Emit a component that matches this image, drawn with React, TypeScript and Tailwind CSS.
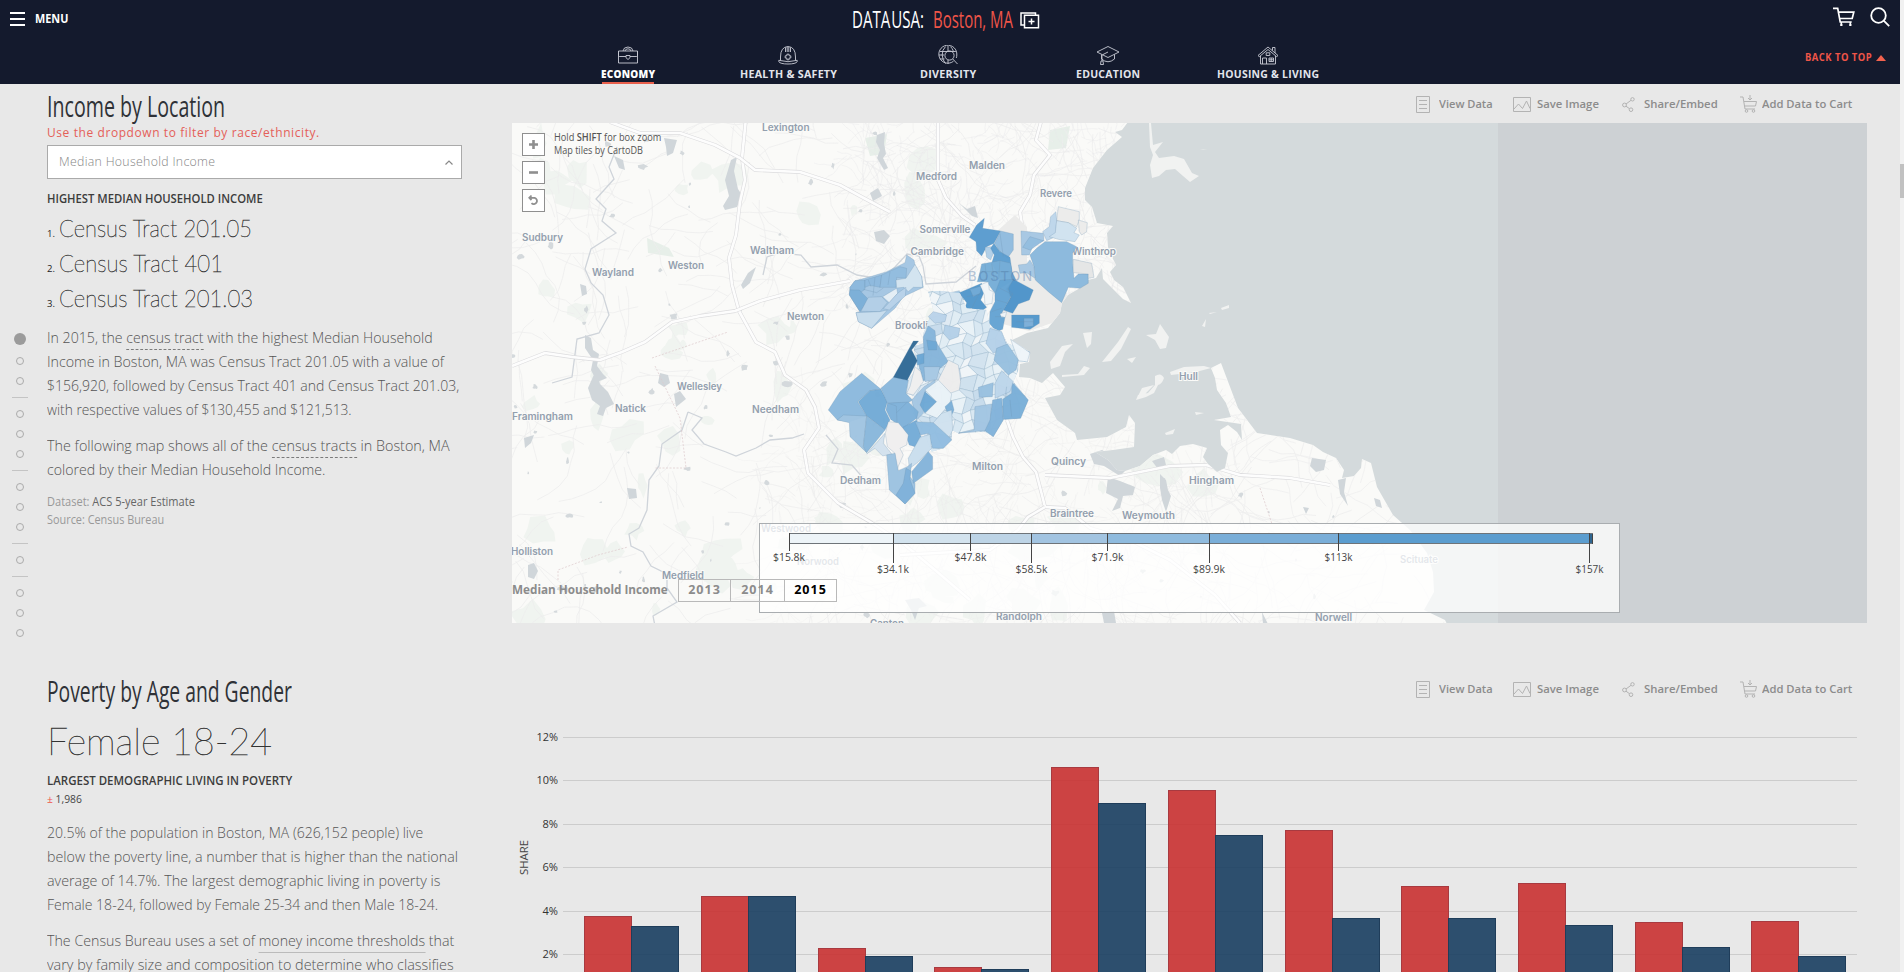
import { useLayoutEffect, useRef, type ReactNode } from "react";

/* Condenses one line of text horizontally so that it fills exactly w pixels. */
function Fit({ w, children, className = "" }: { w: number; children: ReactNode; className?: string }) {
  const ref = useRef<HTMLSpanElement>(null);
  useLayoutEffect(() => {
    const el = ref.current;
    if (el) el.style.transform = `scaleX(${w / el.offsetWidth})`;
  }, [w]);
  return (
    <span className={`block whitespace-nowrap ${className}`} style={{ width: w }}>
      <span ref={ref} className="inline-block origin-left">
        {children}
      </span>
    </span>
  );
}

/* ---------- header ---------- */

const navIcons: Record<string, ReactNode> = {
  ECONOMY: (
    <>
      <path d="M1.5 6h19v12h-19zM1.5 6v4.500q0 1 1 1h6.500M20.500 6v4.500q0 1-1 1H13M9 10.500h4v2.200l-2 1.800-2-1.800zM6 6q.5-4 5-4t5 4M8 6q.3-2.200 3-2.200T14 6" />
    </>
  ),
  "HEALTH & SAFETY": (
    <>
      <path d="M3.500 15.500V12q0-10 7.500-10.500 7.500.5 7.500 10.500v3.500M1.800 15.300q9.200 2.800 18.400 0v1.400q-1.600 2.300-9.200 2.300t-9.200-2.300zM8.500 2.500v4.500M13.500 2.500v4.500M10.200 2v5M11.800 2v5" />
      <path d="M9.900 9.200h2.200v1.600h1.700v2.200h-1.700v1.800H9.900V13H8.200v-2.200h1.700z" />
    </>
  ),
  DIVERSITY: (
    <>
      <path d="M16.500 16.200A9 9 0 1 1 19.800 10q0 1.500-.5 3M2.800 6.500h16M2 10h5M2.800 14h4.700M11 1v5M11 15v4M8.500 1.600Q5 5 5.200 10t3.300 8.600M13.500 1.600Q15.500 3.500 16.300 6" />
      <circle cx="12.500" cy="10.500" r="4.600" />
      <path d="m15.800 14 4.700 5" />
    </>
  ),
  EDUCATION: (
    <>
      <path d="M11 1.500 22 7l-11 5.500L0 7zM4.500 9.500V14q6.500 5.500 13 0V9.500M11 7 6 9.500q-1 .5-1 2V16M4 16h2l.5 3.500h-3z" />
    </>
  ),
  "HOUSING & LIVING": (
    <>
      <path d="M1 10.500 11 2l10 8.500-1.300 1.200L11 4.500l-8.700 7.200zM3.500 11v8h15v-8M15.500 5.500V2.500H18V8M5.500 19v-6h4v6M12 13h4.500v3.500H12zM14.200 13v3.500M12 14.800h4.500M9.200 7.800h3.600v2.700H9.200z" />
    </>
  ),
};

const navItems: { label: string; w: number; active?: boolean }[] = [
  { label: "ECONOMY", w: 54, active: true },
  { label: "HEALTH & SAFETY", w: 97 },
  { label: "DIVERSITY", w: 57 },
  { label: "EDUCATION", w: 64 },
  { label: "HOUSING & LIVING", w: 102 },
];

function Header() {
  return (
    <header className="grid h-[84px] shrink-0 grid-cols-[548px_800px_552px] grid-rows-[40px_44px] bg-[#141a2d] text-white">
      <div className="flex items-center gap-[10px] pl-[10px]">
        <div className="-mt-[2px] flex w-[15px] flex-col gap-[4px]">
          <span className="h-[2px] bg-white" />
          <span className="h-[2px] bg-white" />
          <span className="h-[2px] bg-white" />
        </div>
        <Fit w={33} className="-mt-[2px] text-[12.500px] font-bold">MENU</Fit>
      </div>
      <div className="flex items-center pl-[304px] text-[24.500px] font-semibold leading-[38px]">
        <Fit w={72} className="-mt-[2px] font-medium [word-spacing:-5px]">DATA USA:</Fit>
        <Fit w={80} className="-mt-[2px] ml-[9px] font-medium text-[#ef5548]">Boston, MA</Fit>
        <svg className="ml-[7px] h-[17px] w-[20px]" viewBox="0 0 20 17" fill="none" stroke="white" strokeWidth="1.500">
          <path d="M4.500 3.200h14v12.500h-14zM4 13H1V.9h14.500v2M11.500 6.500v6M8.500 9.500h6" />
        </svg>
      </div>
      <div className="flex items-start justify-end gap-[15px] pr-[10px] pt-[7px]">
        <svg className="h-[20px] w-[22px]" viewBox="0 0 22 20" fill="none" stroke="white" strokeWidth="1.700">
          <path d="M0 1.300h4.700L7.200 15h11.500M5.500 5.200h15.300l-1.600 6.300H6.700M8.300 15v4M17.300 15v4" />
          <path d="M7.300 18h2.200M16.300 18h2.200" />
        </svg>
        <svg className="h-[20px] w-[20px]" viewBox="0 0 20 20" fill="none" stroke="white" strokeWidth="1.800">
          <circle cx="8.500" cy="8.500" r="7.300" />
          <path d="m13.700 13.700 5.500 5.500" />
        </svg>
      </div>
      <nav className="col-start-2 grid grid-cols-5">
        {navItems.map((n) => (
          <a key={n.label} className="flex flex-col items-center pt-[5px]">
            <svg className="h-[20px] w-[22px]" viewBox="0 0 22 20" fill="none" stroke="#c9ccd6" strokeWidth="0.900">
              {navIcons[n.label]}
            </svg>
            <Fit w={n.w} className={n.active ? "h-[17px] text-[10px] font-extrabold leading-[19px] tracking-wide" : "h-[17px] text-[10px] font-bold leading-[19px] tracking-wide text-[#e3e5ec]"}>
              {n.label}
            </Fit>
            {n.active && <span className="h-[2px] w-[52px] bg-[#e8604c]" />}
          </a>
        ))}
      </nav>
      <div className="flex items-start justify-end gap-[4px] pr-[14px] pt-[7px] text-[#ef5548]">
        <Fit w={67} className="text-[10px] font-bold leading-[20px] tracking-wider">BACK TO TOP</Fit>
        <svg className="mt-[8px] h-[6px] w-[10px]" viewBox="0 0 10 6"><path d="M5 0l5 6H0z" fill="#f2624e" /></svg>
      </div>
    </header>
  );
}

/* ---------- side progress dots ---------- */

const dotGroups = [2, 3, 3, 1, 3];

function Dots() {
  return (
    <aside className="flex w-[47px] shrink-0 flex-col pl-[12px] pt-[243px]">
      <span className="flex h-[24px] w-[16px] items-center justify-center"><i className="h-[12px] w-[12px] rounded-full bg-[#9b9b9b]" /></span>
      {dotGroups.map((n, g) => (
        <div key={g} className="flex w-[16px] flex-col">
          {Array.from({ length: n }, (_, i) => (
            <span key={i} className="flex h-[20px] items-center justify-center"><i className="h-[8px] w-[8px] rounded-full border border-[#ababab]" /></span>
          ))}
          {g < 4 && <span className="flex h-[13px] items-center"><i className="h-px w-full bg-[#c4c4c4]" /></span>}
        </div>
      ))}
    </aside>
  );
}

/* ---------- section toolbar ---------- */

function Toolbar() {
  const svg = "shrink-0 fill-none stroke-[#b3b3b3]";
  return (
    <div className="flex h-[39px] items-center pl-[904px] pt-[1px] text-[11.500px] font-semibold text-[#8c8c8c]">
      <svg className={`h-[17px] w-[14px] ${svg}`} viewBox="0 0 14 17"><path d="M.5.5h13v16H.5zM3 4.500h8M3 8.500h8M3 12.500h8" /></svg>
      <Fit w={54} className="ml-[9px]">View Data</Fit>
      <svg className={`ml-[20px] h-[15px] w-[18px] ${svg}`} viewBox="0 0 18 15"><path d="M.5.500h17v14H.5zM1 12l4.500-5 4 4.500L13.500 4l3.500 7.500" /></svg>
      <Fit w={62} className="ml-[6px]">Save Image</Fit>
      <svg className={`ml-[23px] h-[15px] w-[13px] ${svg}`} viewBox="0 0 13 15"><circle cx="2.500" cy="8" r="1.900" /><circle cx="10.500" cy="2.300" r="1.700" /><circle cx="9" cy="12.700" r="1.800" /><path d="m4 7 5-3.700M4 9.200l3.500 2.500" /></svg>
      <Fit w={74} className="ml-[9px]">Share/Embed</Fit>
      <svg className={`ml-[22px] h-[18px] w-[17px] ${svg}`} viewBox="0 0 17 18"><path d="M0 2h3l2 12h10M4 6.500h12.500L15.500 11h-11M10 0v4.500M8 3l2 2 2-2" /><circle cx="6.500" cy="16" r="1.300" /><circle cx="13.500" cy="16" r="1.300" /></svg>
      <Fit w={90} className="ml-[5px]">Add Data to Cart</Fit>
    </div>
  );
}

/* ---------- map ---------- */

/* Small seeded generator so the street texture is the same on every render. */
function seeded(seed: number) {
  let s = seed;
  return () => {
    s = (s * 16807) % 2147483647;
    return s / 2147483647;
  };
}

const rnd = seeded(4711);
const streets = Array.from({ length: 520 }, () => {
  let x = 505 + rnd() * 880;
  let y = 118 + rnd() * 510;
  let a = rnd() * 6.283;
  let d = `M${x.toFixed(1)} ${y.toFixed(1)}`;
  const n = 3 + Math.floor(rnd() * 5);
  for (let i = 0; i < n; i++) {
    a += (rnd() - 0.5) * 0.9;
    x += Math.cos(a) * 13;
    y += Math.sin(a) * 13;
    d += `L${x.toFixed(1)} ${y.toFixed(1)}`;
  }
  return d;
}).join("");

function blobs(count: number, x0: number, x1: number, y0: number, y1: number, r: number) {
  return Array.from({ length: count }, () => {
    const cx = x0 + rnd() * (x1 - x0);
    const cy = y0 + rnd() * (y1 - y0);
    const k = r * (0.4 + rnd());
    const sx = 0.5 + rnd();
    const pts = Array.from({ length: 9 }, (_, i) => {
      const t = (i / 9) * 6.283;
      const q = k * (0.55 + rnd() * 0.7);
      return `${(cx + Math.cos(t) * q * sx).toFixed(1)} ${(cy + Math.sin(t) * q).toFixed(1)}`;
    });
    return `M${pts.join("L")}Z`;
  }).join("");
}
const parks = blobs(64, 512, 960, 130, 620, 13) + blobs(16, 960, 1340, 470, 620, 14);
const ponds = blobs(70, 512, 900, 130, 620, 2.6) + blobs(16, 1000, 1340, 460, 620, 2.4);

/* District mosaic: a jittered grid in the 960-unit district space. */
const g = 33;
const node = (i: number, j: number): [number, number] => {
  const r = seeded(i * 7919 + j * 104729 + 17);
  r();
  return [350 + i * g + (r() - 0.5) * 24 + (j % 2) * 9, 250 + j * g + (r() - 0.5) * 24 - i * 3];
};
const shades = ["#e9f2f7", "#d9e8f2", "#cfe1ee", "#e1edf4", "#c8dcec", "#dfeaf3", "#f0f5f8", "#d3e3ef"];
const mosaic: [string, string][] = [];
for (let i = 0; i < 11; i++)
  for (let j = 0; j < 17; j++) {
    const p = [node(i, j), node(i + 1, j), node(i + 1, j + 1), node(i, j + 1)];
    mosaic.push([`M${p.map((q) => q.map((v) => v.toFixed(0)).join(" ")).join("L")}Z`, shades[Math.floor(rnd() * shades.length)]]);
  }

const mass =
  "385,275 420,272 480,280 500,325 560,330 570,380 605,395 622,430 690,455 680,485 655,485 655,510 640,545 685,600 660,655 610,660 580,710 555,695 475,700 455,690 455,720 430,745 395,755 370,700 330,620 345,590 318,580 325,540 352,500 340,440 370,430 370,400 400,330";

const tracts: [string, string][] = [
  ["#a3c5e2", "165,242 205,232 260,215 315,188 320,165 342,180 345,195 365,230 370,262 310,290 285,325 215,385 175,365 168,338 180,335 148,285 150,262"],
  ["#8cb9dd", "165,242 195,240 195,268 185,275 150,270 150,262"],
  ["#7cafd8", "150,270 178,270 205,298 180,335 148,285"],
  ["#8ebade", "195,240 245,225 240,262 210,256 195,262"],
  ["#93bddf", "245,225 300,200 320,205 318,235 290,232 288,262 240,262"],
  ["#b4d0e7", "205,292 245,290 262,308 240,335 183,334"],
  ["#e6eff6", "248,290 290,265 293,280 268,308"],
  ["#c9deed", "168,338 240,335 262,330 215,385 175,365"],
  ["#d5e5f1", "318,235 345,193 365,230 368,262 340,262 325,275 312,262 290,264 288,240"],
  ["#b9d3e9", "295,278 318,262 316,288 290,310 268,330 250,326"],
  ["#ebebea", "775,20 838,35 838,60 830,80 805,68 770,62"],
  ["#a5c6e2", "663,93 730,100 732,122 700,135 688,165 665,165"],
  ["#94bddf", "690,110 730,122 690,150 668,142"],
  ["#bdd6ea", "728,95 748,80 752,50 768,35 770,62 766,110 740,122"],
  ["#d0e2ef", "770,62 805,68 830,85 822,98 838,105 825,125 775,118 748,110 766,98"],
  ["#ebebea", "835,60 862,68 860,95 845,105 838,95"],
  ["#89b8dc", "690,165 710,145 735,125 800,125 830,140 818,160 818,190 822,235 835,222 865,222 865,250 840,265 805,262 785,308 745,275 706,240 702,200"],
  ["#a5c6e2", "655,195 680,192 690,180 702,200 705,235 680,218 660,220"],
  ["#e4e5e5", "820,178 875,190 882,232 865,235 865,222 820,218"],
  ["#599bce", "508,112 530,75 553,55 548,85 602,93 582,130 560,140 545,168 530,152 528,125"],
  ["#90bbde", "602,93 640,102 640,150 622,175 600,155 584,130"],
  ["#b0cee7", "555,142 575,140 580,160 572,180 560,172"],
  ["#5b9dcf", "582,130 600,155 630,172 636,215 648,240 600,235 575,190 583,165 572,145"],
  ["#76add7", "545,192 600,182 632,190 640,240 600,265 585,280 560,245 532,245 540,215"],
  ["#4c93c9", "640,238 700,270 688,300 655,312 638,340 610,330 632,292 618,268"],
  ["#64a3d3", "585,280 600,240 640,238 625,265 632,292 605,340 600,342 615,352 608,388 590,395 568,370 570,335 585,305"],
  ["#a9cae4", "430,283 478,272 492,300 470,292"],
  ["#5297cb", "478,278 545,250 553,275 542,300 560,322 530,345 515,325 492,335 500,308"],
  ["#72aad6", "510,268 545,258 540,280 520,290"],
  ["#f1f5f7", "540,255 565,245 568,270 580,275 576,310 555,315 553,285"],
  ["#eef3f6", "600,342 620,335 616,352 604,352"],
  ["#5297cb", "635,345 718,345 718,370 690,388 635,382"],
  ["#7fb1d9", "672,355 700,355 700,378 672,382"],
];

const tractsSouth: [string, string][] = [
  ["#b5d1e8", "570,385 605,395 622,440 580,460 558,430"],
  ["#eef5f9", "632,418 690,458 682,486 655,482"],
  ["#98c0df", "590,445 622,432 655,480 648,510 625,525 582,480"],
  ["#bad3e9", "385,350 400,335 440,345 435,365 405,370"],
  ["#b4d0e7", "435,375 480,385 475,410 448,420 430,400"],
  ["#86b5da", "385,378 405,392 408,425 445,485 420,505 405,535 370,542 355,490 372,465 370,410"],
  ["#6fa8d5", "380,420 410,425 410,450 385,450"],
  ["#6ba6d4", "350,465 372,460 372,490 352,495"],
  ["#a9c9e4", "372,500 420,500 410,538 375,545"],
  ["#edecec", "412,545 445,480 475,495 482,545 478,570 450,580"],
  ["#f0eeee", "330,560 345,500 362,515 370,545 340,585 320,580"],
  ["#a5c6e2", "335,600 372,560 405,540 408,560 375,575 370,640 350,660"],
  ["#6ea8d5", "375,575 410,605 375,640 360,615"],
  ["#e9f2f7", "375,570 415,540 455,582 450,610 412,655 375,640 410,605"],
  ["#7cafd8", "435,620 455,602 462,630 450,655"],
  ["#99c0df", "535,562 580,548 577,590 538,592"],
  ["#a2c5e2", "525,620 575,612 570,690 475,700 522,690"],
  ["#82b3da", "578,600 605,595 610,660 580,710 555,692 570,660"],
  ["#7bafd8", "608,598 635,580 635,545 685,600 662,655 610,658"],
  ["#bdd6ea", "585,550 605,512 640,545 630,575 585,595"],
  ["#8bb9dd", "185,520 243,568 210,572 173,605 200,648 150,665 112,660 85,630 120,575"],
  ["#72aad6", "175,605 210,572 243,568 262,605 255,630 270,660 255,690 200,648"],
  ["#a0c4e1", "112,660 130,645 200,648 190,740 200,758 150,710 148,668"],
  ["#88b7db", "200,648 255,690 200,758 190,740"],
  ["#8ab8dc", "243,565 282,530 325,540 318,580 337,600 325,608 262,610"],
  ["#7eb1d9", "262,610 325,606 355,635 350,655 310,685 272,658 258,630"],
  ["#74abd7", "308,682 350,660 364,715 345,740 328,735"],
  ["#92bde0", "345,665 400,668 430,690 455,720 430,745 398,745 385,700 362,705"],
  ["#d0e1ee", "400,668 425,640 455,630 458,690 448,712"],
  ["#c9deed", "325,775 360,712 390,703 395,745 350,790 328,806"],
  ["#d3e1ed", "200,762 255,700 250,730 275,762 248,768 225,745"],
  ["#f0eeee", "256,700 265,665 295,668 325,705 320,735 300,745 310,765 290,810 285,760 262,740"],
  ["#9cc2e0", "260,765 285,760 295,812 322,800 335,790 330,830 345,850 345,880 315,912 268,870"],
  ["#84b4da", "335,815 385,755 398,770 398,808 340,850"],
  ["#80b2da", "318,805 332,812 330,838 345,880 315,912 288,885 310,850"],
  ["#2f6996", "340,423 356,423 335,450 352,482 322,541 280,532"],
];

const cities: [string, number, number, number][] = [
  ["Lexington", 762, 809.5, 130.5], ["Medford", 916, 957, 180], ["Malden", 969, 1005, 169], ["Revere", 1040, 1072, 197],
  ["Somerville", 919.5, 970.5, 233], ["Cambridge", 910.5, 964, 255], ["Winthrop", 1072, 1116, 255], ["Sudbury", 522, 563, 241],
  ["Wayland", 592, 634, 275.5], ["Weston", 668, 704, 269], ["Waltham", 750, 794, 254], ["Newton", 787, 824, 320],
  ["Brookli", 895, 928, 329], ["Wellesley", 677, 722, 390], ["Natick", 615, 646, 412], ["Needham", 752, 799, 412.5],
  ["Framingham", 512, 573, 420], ["Dedham", 840, 881, 484], ["Milton", 972, 1003, 470], ["Quincy", 1051, 1086, 465],
  ["Braintree", 1050, 1094, 517], ["Weymouth", 1122, 1175, 519], ["Hingham", 1189, 1234, 484], ["Hull", 1179, 1198, 380],
  ["Holliston", 511, 553, 555], ["Medfield", 662, 704, 579], ["Westwood", 761, 811, 532], ["Norwood", 797, 839, 565],
  ["Scituate", 1400, 1438, 563], ["Randolph", 996, 1042, 620], ["Norwell", 1315, 1352, 621], ["Canton", 870, 904, 627],
];

const land =
  "M505 115L1128 122 1122 130 1115 132 1122 137 1107 150 1093 168 1085 188 1085 200 1092 207 1097 223 1113 226 1107 233 1108 247 1112 257 1116 265 1110 272 1114 280 1123 287 1131 303 1123 299 1110 286 1103 279 1102 268 1096 278 1088 280 1080 288 1068 295 1062 303 1060 313 1048 328 1027 333 1012 340 1030 352 1029 362 1020 364 1019 377 1030 378 1042 383 1053 373 1065 387 1060 395 1045 398 1057 420 1075 433 1077 440 1107 437 1126 427 1129 415 1135 423 1134 447 1113 450 1095 452 1108 460 1117 470 1125 471 1140 466 1153 455 1166 450 1172 454 1180 446 1193 444 1207 448 1203 457 1208 464 1217 472 1225 468 1228 453 1221 445 1220 430 1228 425 1237 432 1242 440 1241 424 1214 420 1231 417 1226 403 1217 390 1215 378 1211 368 1221 363 1238 408 1257 433 1290 438 1313 445 1323 452 1336 458 1344 470 1342 478 1354 476 1361 468 1362 459 1371 463 1377 487 1393 515 1410 530 1427 553 1433 572 1434 592 1424 610 1445 620 1450 630 505 630Z";

const islands =
  "M1149 123h2l2 22 10-3-8 10 4 6 15-2 10 3 8 14 7 3-9 6-7-6-8-7-9 1-7 6-7 2-2-13 3-10-3-8zM1050 362l12-16 11-2-8 8-5 14-9 3zM1083 333l9-1-1 12-4 4zM1102 362l16-20 10-15 3 2-10 20-10 12zM1146 335l10-1 4-10 9 13-3 11-6 1-5-9zM1127 359l9-2-4 6zM1062 375l16-1 6-8 6 2-6 7-22 2zM1170 372l14-5 20-1 7 2-15 4-25 3zM1155 376q6-4 9 2-2 6-6 7l-4 8-8 4-10 3 2-5 10-2 7-8zM1205 307l-2-6 2 6zM1221 308l8-3v3l-7 2zM1209 313l8-1-7 2zM1202 326l4-7-1 8zM1200 150l7-1-4 1zM1195 412l9 1-8 2zM1165 433l10-4-2 5-7 1zM1183 434l4 1zM1142 388l12-3-9 9-8 4z";

const roads = [
  "M746 118L742 158 745 180 740 202 736 235 729 258 732 285 739 311 756 342 775 352 785 375 806 390 815 407 819 428 804 450 808 473 838 503 872 523 905 545 935 570 970 600",
  "M512 366L545 353 572 357 600 360 622 352 645 342 672 322 700 316 735 311 760 301 800 290 850 281",
  "M610 122L640 133 680 133 715 145 740 158 755 170 800 172 840 185 860 196 890 212",
  "M938 118L938 180 946 198 962 216 975 225",
  "M1042 118L1036 140 1050 155 1034 175 1030 195 1020 212 1022 225 1010 235",
  "M1007 420L1013 437 1023 457 1036 472 1042 495 1045 507 1065 508 1090 528 1130 540 1170 560 1215 595 1240 623",
  "M1045 507L1028 517 1018 530 990 550 900 555",
  "M1045 475L1110 478 1170 466 1206 465 1240 475 1290 478 1330 485",
];

const legendStops: [number, string, boolean][] = [
  [789, "$15.8k", false], [893, "$34.1k", true], [970.5, "$47.8k", false], [1031.5, "$58.5k", true],
  [1107.5, "$71.9k", false], [1209, "$89.9k", true], [1338.5, "$113k", false], [1589.5, "$157k", true],
];
const legendFill = ["#edf4f8", "#d3e3ee", "#bdd4e6", "#a2c4e1", "#8fbbde", "#7aaed8", "#5b9dcf"];

function MapView() {
  return (
    <div className="relative h-[500px] w-[1355px] overflow-hidden bg-[#d4dadc]">
      <svg className="block h-[500px] w-[1355px]" viewBox="512 123 1355 500">
        <defs>
          <clipPath id="land"><path d={land} /></clipPath>
          <clipPath id="mass"><polygon points={mass} /></clipPath>
        </defs>
        <rect x="1498" y="123" width="370" height="500" fill="#cdd1d4" />
        <path d={land} fill="#fafaf8" />
        <path d={islands} fill="#f1f2f1" />
        <g clipPath="url(#land)">
          <path d={parks} fill="#f0f4f0" />
          <path d="M647 238l22 10 5 9-26-4zM865 138l22-4-3 20-14 2zM1050 130l20-4-4 22-18 2z" fill="#e7efe9" />
          <path d={streets} fill="none" stroke="#ededee" strokeWidth="0.8" />
          <path d={streets} fill="none" stroke="#f0f0f0" strokeWidth="0.8" transform="translate(330 40) rotate(8 700 400)" />
          <path d={streets} fill="none" stroke="#ebebec" strokeWidth="0.6" transform="translate(520 330) scale(.5)" />
          <path d={streets} fill="none" stroke="#e9e9ea" strokeWidth="1" transform="translate(640 60) scale(.4)" />
          <path d={ponds} fill="#d4d9dc" />
          <path
            fill="#d0d6da"
            d="M731 160l6-3-3 14 4 18 4 6-5 12-12 3-2-4 6-10-4-16zM877 135l8-3-1 12 2 10-3 4 5 10-4 2-7-12 3-8-4-8zM664 138l13 2-4 13-6 3-1-9zM870 193l8-5 4 8-9 5zM874 232l10-2 6 6-6 8-8-3zM614 156l9 4 2 10-6-2zM585 335l6 3 2 12 6 4-2 12 6 8 4 4-10 4-6-12 2-10-8-12zM596 370l4 14 8 8 6 12-8 4-3 8-6-2 3-8-8-6-4-12zM660 373l8 2 2 8-6 4-6-4zM674 394l6-3 6 8-10 8zM524 438l10-3-3 8-6 5zM627 488l9 1 1 9-8 1zM528 565l6-2 4 8-4 8-6-2zM580 284l6 2 1 8-5 2zM741 285l7-12 8-6-6 16-7 6zM959 203l8 6 8-3 3 12-6-2zM1090 454l12-4 14 8 10 12-6 6-16-10-10-2zM1108 477l12 4 15 6-2 8-10 1-3 12-8 3 6-12-12-6zM1160 474l6 6 2 10 3 6-5 16-4-12-2-12zM1152 461l12-4 2 8-8 4zM1312 458l14 2-2 10-8 2-6-6zM1338 480l8-2-2 14 4 14-8-12zM1303 507l6 1-3 6zM1374 498l6 2 2 8-6-2zM1102 613l12-2 2 12h-12zM1262 612l6 12h-5zM905 600l14-2 8 8-8 2-4 12-4-10z"
          />
          <path d="M617 147l-8 20 5 12-18 20 10 10-4 12 14 12-25 16-6 20 6 14 12 12 6 20-10 18-22 6-5 38-20 6M763 275l4-18 12-4 22 2 10 12 26-2 20 10 24 4 14-12 12-13 12 2 4 10 3 18 30-2 20-16M688 412l-6 18-20 14-3 22-10 14-2 30-8 18-10 6 2 12 12 6 8 14 16 8 0 14 10 14-24 14 4 20M688 412l14 6-10 12 12 14 22 8 10 4 20-8 14-8 22-2 12-4M826 435l12 14-6 14 20 2 12 14" fill="none" stroke="#cfd4da" strokeWidth="1.300" />
          <path d="M655 366l25 52 6 50-32 0M558 580l0-10 40-15 30-8M652 358l76-26M1260 488l12 36" fill="none" stroke="#dcc9cc" strokeWidth="0.700" strokeDasharray="2 1.500" />
          {roads.map((d) => (
            <g key={d} fill="none" strokeLinejoin="round">
              <path d={d} stroke="#dcdcde" strokeWidth="3.800" />
              <path d={d} stroke="#fdfdfd" strokeWidth="2.600" />
            </g>
          ))}
          <path d="M1015 215l12 12 0 40 50 35-8 15-40 14-30-8 4-30-8-60z" fill="#ebebea" />
        </g>
        <g fontFamily="Inter, 'Liberation Sans', sans-serif" fontSize="10" fontWeight="600" fill="#939fae">
          {cities.map(([name, x0, x1, y]) => (
            <text key={name} x={x0} y={y} textLength={x1 - x0} lengthAdjust="spacingAndGlyphs" stroke="#fafaf8" strokeWidth="2" paintOrder="stroke">
              {name}
            </text>
          ))}
        </g>
        <g transform="translate(800 200) scale(.3333)" stroke="#6b8fae" strokeOpacity=".4" strokeWidth="2" strokeLinejoin="round">
          {tracts.map(([c, p], i) => <polygon key={i} points={p} fill={c} fillOpacity=".97" />)}
          <g clipPath="url(#mass)">
            <polygon points={mass} fill="#dfeaf2" />
            {mosaic.map(([d, c], i) => <path key={i} d={d} fill={c} strokeOpacity=".3" />)}
          </g>
          {tractsSouth.map(([c, p], i) => <polygon key={i} points={p} fill={c} fillOpacity=".97" />)}
          <path d="M555 190l5 50M545 215h90M600 182l-4 55M575 190l8 50M600 265l40 20M590 300l35 10M575 335l30-10M500 290l45-8M515 325l20-40M585 350h25M600 100l10 70M620 560l-5 35M630 600l5 50" fill="none" />
          <path d="M620 265l18 15-12 30M650 365h50M225 232l-6 55M270 215l-6 40M190 268l40 10 20-14M265 610l24 8 2 50M320 608l-30 30M205 240l8 20" fill="none" />
        </g>
        <text x="968" y="281" textLength="64" fontFamily="Inter, sans-serif" fontSize="13" fontWeight="500" fill="#4f77a6" fillOpacity=".4">BOSTON</text>

        <rect x="759.5" y="523.5" width="860" height="89" fill="white" fillOpacity=".75" stroke="#a9adb0" />
        {legendFill.map((c, i) => (
          <rect key={c} x={legendStops[i][0]} y="534" width={legendStops[i + 1][0] - legendStops[i][0]} height="10" fill={c} />
        ))}
        <rect x="1589.500" y="534" width="3" height="10" fill="#2f6690" />
        <path d="M789 533.500h804M789 543.500h804" stroke="#6e7479" />
        <path d="M1592.500 534v10" stroke="#444" />
        <g fontFamily="'Open Sans', sans-serif" fontSize="11.500" fill="#444">
          {legendStops.map(([x, t, long]) => (
            <g key={t}>
              <path d={`M${Math.floor(x) + 0.5} 533V${long ? 563 : 551}`} stroke="#444" />
              <text x={x - (t.length > 5 ? 16 : 14)} y={long ? 572.5 : 560.5} textLength={t.length > 5 ? 32 : 28} lengthAdjust="spacingAndGlyphs">{t}</text>
            </g>
          ))}
        </g>
      </svg>

      <div className="absolute left-[10px] top-[10px] flex gap-[9px]">
        <div className="flex flex-col gap-[5px]">
          {["M11.500 7v9M7 11.500h9", "M7 11.500h9", "M7.500 8.800h5.200a3.200 3.200 0 1 1-3.200 5.300M9.500 6.500 7.300 8.800l2.200 2.200"].map((d, i) => (
            <svg key={d} className="h-[23px] w-[23px] border border-[#8f8f8f] bg-white" viewBox="1 1 21 21" fill="none" stroke="#8f8f8f" strokeWidth={i < 2 ? 2.6 : 1.8}>
              <path d={d} />
            </svg>
          ))}
        </div>
        <div className="-mt-[2px] text-[10px] leading-[13px] text-[#555]">
          <Fit w={107}>Hold <b className="font-semibold">SHIFT</b> for box zoom</Fit>
          <Fit w={89}>Map tiles by CartoDB</Fit>
        </div>
      </div>

      <div className="absolute left-0 top-[456px] flex items-center text-[13px] font-bold text-[#8c8c8c]">
        <Fit w={156} className="-mt-[2px] mr-[10px]">Median Household Income</Fit>
        <div className="flex h-[23px] divide-x divide-[#b9b9b9] border border-[#b9b9b9] text-center text-[12.500px] leading-[20px] tracking-[1px]">
          <span className="w-[52px]">2013</span>
          <span className="w-[54px]">2014</span>
          <span className="w-[51px] bg-white/60 text-black">2015</span>
        </div>
      </div>
    </div>
  );
}

/* ---------- bar chart ---------- */

const bars: [number, number, number][] = [
  [584, 916, 926], [701, 896, 896], [818, 948, 956], [934, 967, 969], [1051, 767, 803], [1168, 790, 835],
  [1285, 830, 918], [1401, 886, 918], [1518, 883, 925], [1635, 922, 947], [1751, 921, 956],
];
const gridLines: [string, number][] = [["12%", 737], ["10%", 780], ["8%", 824], ["6%", 867], ["4%", 911], ["2%", 954]];

function PovertyChart() {
  return (
    <svg className="block h-[264px] w-[1355px]" viewBox="512 708 1355 264" fontFamily="'Open Sans', sans-serif">
      {gridLines.map(([t, y]) => (
        <g key={t}>
          <path d={`M563 ${y + 0.5}H1857`} stroke="#cccccc" />
          <text x={t.length > 2 ? 536.5 : 542.5} y={y + 4} fontSize="11" fill="#333" textLength={t.length > 2 ? 21.5 : 15.5} lengthAdjust="spacingAndGlyphs">{t}</text>
        </g>
      ))}
      <text transform="translate(528 875) rotate(-90)" fontSize="11" fill="#444" textLength="35" lengthAdjust="spacingAndGlyphs">SHARE</text>
      {bars.map(([x, r, b]) => (
        <g key={x}>
          <rect x={x + 0.5} y={r + 0.5} width="47" height="300" fill="#c93131" fillOpacity=".9" stroke="#a83a40" />
          <rect x={x + 47.5} y={b + 0.5} width="47" height="300" fill="#183e60" fillOpacity=".9" stroke="#1f3d5a" />
        </g>
      ))}
    </svg>
  );
}

/* ---------- page ---------- */

const h2 = "text-[29px] font-medium leading-[30px] text-[#2f3237]";
const body = "text-[15px] font-[360] leading-[24px] text-[#555]";
const thin = "font-['Lato',sans-serif] font-thin text-[#222] [-webkit-text-stroke:0.4px_#333]";

function Term({ children }: { children: ReactNode }) {
  return <span className="border-b border-dashed border-[#777] pb-[2px]">{children}</span>;
}

export default function App() {
  return (
    <div className="flex h-[972px] w-[1904px] overflow-hidden bg-[#e8e8e8] font-['Open_Sans',sans-serif]">
      <div className="flex h-[972px] w-[1900px] shrink-0 flex-col overflow-hidden">
        <Header />
        <div className="flex">
          <Dots />
          <main className="flex flex-col">
            <section className="flex h-[585px] gap-[50px]">
              <div className="w-[415px] pt-[7px]">
                <h2 className={h2}><Fit w={178}>Income by Location</Fit></h2>
                <Fit w={273} className="mt-[1px] text-[13.500px] leading-[20px] tracking-wider text-[#e45f59]">Use the dropdown to filter by race/ethnicity.</Fit>
                <div className="mt-[3px] flex h-[34px] items-center justify-between border border-[#aaaaaa] bg-white pl-[11px] pr-[8px] text-[13.500px] font-[350] text-[#858585]">
                  <Fit w={156} className="-mt-[2px] tracking-wide">Median Household Income</Fit>
                  <svg className="h-[5px] w-[8px]" viewBox="0 0 8 5" fill="none" stroke="#888" strokeWidth="1.200"><path d="m.5 4.500 3.500-3.500 3.500 3.500" /></svg>
                </div>
                <Fit w={216} className="mt-[10px] text-[12px] font-[550] leading-[20px] text-[#3c3c3c]">HIGHEST MEDIAN HOUSEHOLD INCOME</Fit>
                <ol className={`mt-[2px] text-[23px] leading-[35px] ${thin}`}>
                  {([["201.05", 193], ["401", 164], ["201.03", 194]] as [string, number][]).map(([n, w], i) => (
                    <li key={n} className="flex h-[35px] items-baseline gap-[4px]">
                      <span className="w-[8px] font-['Open_Sans',sans-serif] text-[9.500px] font-medium leading-none [-webkit-text-stroke:0]">{i + 1}.</span>
                      <Fit w={w}>Census Tract {n}</Fit>
                    </li>
                  ))}
                </ol>
                <div className={`mt-[9px] ${body}`}>
                  <Fit w={386}>In 2015, the <Term>census tract</Term> with the highest Median Household</Fit>
                  <Fit w={397}>Income in Boston, MA was Census Tract 201.05 with a value of</Fit>
                  <Fit w={412}>$156,920, followed by Census Tract 401 and Census Tract 201.03,</Fit>
                  <Fit w={305}>with respective values of $130,455 and $121,513.</Fit>
                </div>
                <div className={`mt-[12px] ${body}`}>
                  <Fit w={403}>The following map shows all of the <Term>census tracts</Term> in Boston, MA</Fit>
                  <Fit w={278}>colored by their Median Household Income.</Fit>
                </div>
                <div className="mt-[12px] text-[12px] leading-[18px] text-[#999]">
                  <Fit w={148}>Dataset: <span className="text-[#666]">ACS 5-year Estimate</span></Fit>
                  <Fit w={117}>Source: Census Bureau</Fit>
                </div>
              </div>
              <div>
                <Toolbar />
                <MapView />
              </div>
            </section>
            <section className="flex gap-[50px]">
              <div className="w-[415px] pt-[7px]">
                <h2 className={h2}><Fit w={245}>Poverty by Age and Gender</Fit></h2>
                <Fit w={225} className={`mt-[12px] text-[38px] leading-[45px] ${thin}`}>Female 18-24</Fit>
                <Fit w={245} className="mt-[8px] text-[12px] font-[550] leading-[19px] text-[#3c3c3c]">LARGEST DEMOGRAPHIC LIVING IN POVERTY</Fit>
                <Fit w={35} className="text-[11.500px] leading-[18px] text-[#444]"><span className="text-[#ef5548]">±</span> 1,986</Fit>
                <div className={`mt-[12px] ${body}`}>
                  <Fit w={376}>20.5% of the population in Boston, MA (626,152 people) live</Fit>
                  <Fit w={411}>below the poverty line, a number that is higher than the national</Fit>
                  <Fit w={393}>average of 14.7%. The largest demographic living in poverty is</Fit>
                  <Fit w={391}>Female 18-24, followed by Female 25-34 and then Male 18-24.</Fit>
                </div>
                <div className={`mt-[12px] ${body}`}>
                  <Fit w={407}>The Census Bureau uses a set of <span className="border-b border-[#bbb] pb-[2px]">money income thresholds</span> that</Fit>
                  <Fit w={407}>vary by family size and composition to determine who classifies</Fit>
                </div>
              </div>
              <div>
                <Toolbar />
                <PovertyChart />
              </div>
            </section>
          </main>
        </div>
      </div>
      <div className="flex h-[972px] w-[4px] shrink-0 flex-col bg-[#f1f1f1] pt-[164px]">
        <span className="h-[34px] bg-[#c1c1c1]" />
      </div>
    </div>
  );
}
